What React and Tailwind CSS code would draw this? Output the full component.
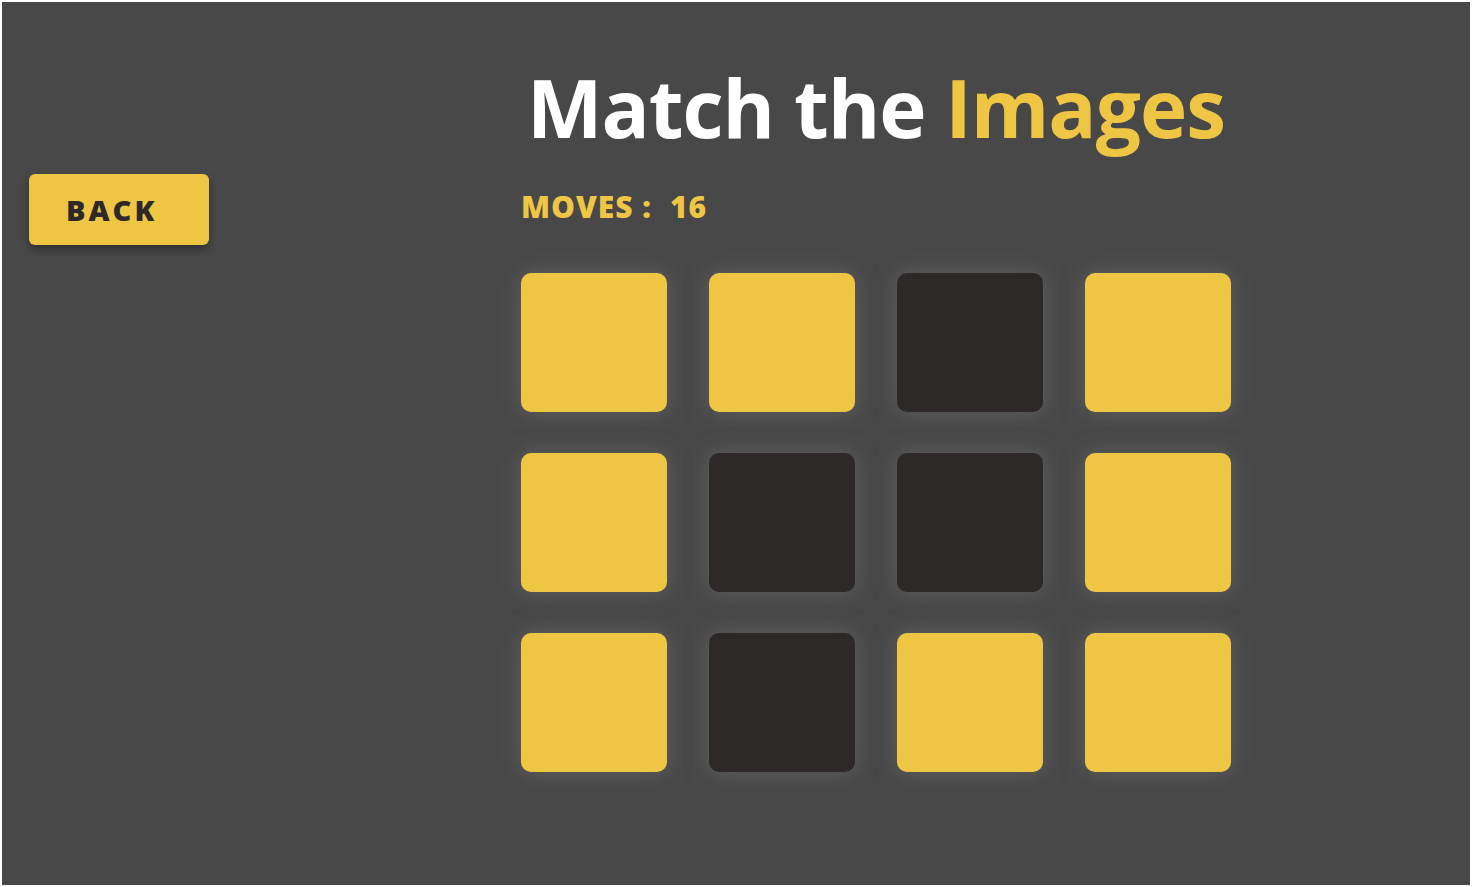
import React from "react";

// Y = face-down yellow card, D = matched / dark card
const BOARD = [
  ["Y", "Y", "D", "Y"],
  ["Y", "D", "D", "Y"],
  ["Y", "D", "Y", "Y"],
];

const Tile = ({ kind }) => (
  <div
    className={`w-[146px] h-[139px] rounded-[10px] shadow-[0_0_22px_rgba(120,120,120,0.55)] ${
      kind === "Y" ? "bg-[#efc544]" : "bg-[#2e2929]"
    }`}
  />
);

export default function App() {
  return (
    <div className="min-h-screen bg-white p-[2px]" style={{ fontFamily: '"Open Sans", "Noto Sans", sans-serif' }}>
      <div className="h-[883px] bg-[#484848] flex">
        {/* Left: back button */}
        <div className="w-[519px] shrink-0 pl-[27px] pt-[172px]">
          <button className="w-[180px] h-[71px] rounded-[6px] bg-[#efc544] shadow-[0_4px_8px_rgba(0,0,0,0.35)] flex items-center pl-[37px]">
            <span className="text-[29px] font-extrabold tracking-[3px] text-[#2e2929] leading-none">BACK</span>
          </button>
        </div>

        {/* Main: title, moves, board */}
        <div className="flex flex-col">
          <h1 className="pt-[65px] pl-[6px] text-[80px] font-bold leading-none text-white tracking-[-1px]">
            Match the <span className="text-[#efc544]">Images</span>
          </h1>
          <div className="mt-[45px] text-[30px] font-extrabold leading-none tracking-[1px] text-[#efc544] flex">
            <span>MOVES :</span>
            <span className="ml-[18px]">16</span>
          </div>
          <div className="mt-[51px] grid grid-cols-[repeat(4,146px)] gap-x-[42px] gap-y-[41px]">
            {BOARD.flat().map((k, i) => (
              <Tile key={i} kind={k} />
            ))}
          </div>
        </div>
      </div>
    </div>
  );
}
